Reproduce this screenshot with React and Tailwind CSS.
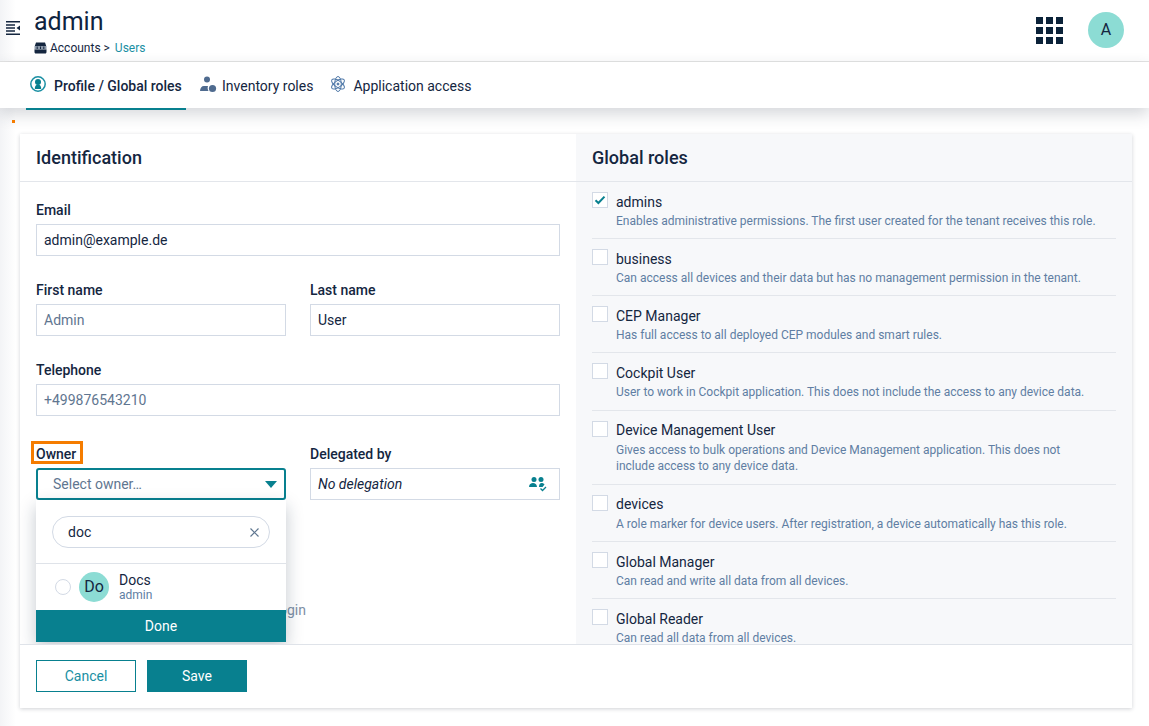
import React from "react";

const roles = [
  { name: "admins", desc: "Enables administrative permissions. The first user created for the tenant receives this role.", checked: true, h: "h-[57px]" },
  { name: "business", desc: "Can access all devices and their data but has no management permission in the tenant.", h: "h-[57px]" },
  { name: "CEP Manager", desc: "Has full access to all deployed CEP modules and smart rules.", h: "h-[57px]" },
  { name: "Cockpit User", desc: "User to work in Cockpit application. This does not include the access to any device data.", h: "h-[58px]" },
  { name: "Device Management User", desc: "Gives access to bulk operations and Device Management application. This does not include access to any device data.", h: "h-[74px]", tight: true },
  { name: "devices", desc: "A role marker for device users. After registration, a device automatically has this role.", h: "h-[57px]", tight: true },
  { name: "Global Manager", desc: "Can read and write all data from all devices.", h: "h-[57px]" },
  { name: "Global Reader", desc: "Can read all data from all devices.", h: "h-[57px]" },
];

const Field = ({ label, value, muted }) => (
  <div className="flex flex-col">
    <label className="h-[20px] text-sm leading-5 font-medium text-[#14263f] mb-1">{label}</label>
    <div className={`h-8 border border-[#d3dae5] px-[7px] text-sm leading-[30px] ${muted ? "text-[#5f7690]" : "text-[#14263f]"}`}>
      {value}
    </div>
  </div>
);

const RoleRow = ({ role, last }) => (
  <div className={`flex gap-2 pt-[10px] ${role.h} ${last ? "" : "border-b border-[#e3e6eb]"}`}>
    <div className="w-4 h-4 border border-[#d3dae5] bg-white flex items-center justify-center shrink-0">
      {role.checked && (
        <svg width="12" height="10" viewBox="0 0 12 10">
          <path d="M1.5 5.2 4.4 8 10.5 1.6" fill="none" stroke="#08808f" strokeWidth="2" />
        </svg>
      )}
    </div>
    <div className="min-w-0">
      <div className={`text-sm leading-5 text-[#14263f] ${role.tight ? "-mt-px" : ""}`}>{role.name}</div>
      <div className={`text-xs leading-4 text-[#607ea3] pr-[20px] ${role.tight ? "mt-[2px]" : "mt-px"}`}>{role.desc}</div>
    </div>
  </div>
);

const OwnerDropdown = () => (
  <div className="absolute left-0 right-0 top-[32px] z-10 bg-white shadow-[0_6px_16px_rgba(20,38,63,0.25)]">
    <div className="h-[64px] border-b border-[#dfe3e9] px-4 pt-4">
      <div className="h-8 rounded-full border border-[#d3dae5] pl-[15px] pr-[10px] flex items-center justify-between text-sm text-[#14263f]">
        <span>doc</span>
        <svg width="9" height="9" viewBox="0 0 9 9">
          <path d="M.5.5l8 8M8.5.5l-8 8" stroke="#5f7690" strokeWidth="1.2" />
        </svg>
      </div>
    </div>
    <div className="h-[46px] flex items-center pl-[19px]">
      <div className="w-4 h-4 rounded-full border border-[#d3dae5]"></div>
      <div className="ml-2 w-[30px] h-[30px] rounded-full bg-[#8cdcd4] flex items-center justify-center text-base text-[#14263f]">Do</div>
      <div className="ml-[10px]">
        <div className="text-sm leading-[15px] text-[#14263f]">Docs</div>
        <div className="text-xs leading-[14px] text-[#607ea3]">admin</div>
      </div>
    </div>
    <div className="h-8 bg-[#08808f] text-white text-sm leading-8 text-center">Done</div>
  </div>
);

const App = () => {
  return (
    <div className="relative w-[1149px] h-[726px] overflow-hidden bg-white flex flex-col font-['Roboto',sans-serif] text-[#14263f]">
      {/* collapsed navigator shadow */}
      <div className="absolute left-0 top-0 bottom-0 w-[16px] bg-gradient-to-r from-[#f3f4f6] to-transparent"></div>

      <header className="relative h-[62px] shrink-0 border-b border-[#e4e4e4] flex items-start">
        <svg className="mt-[21px] ml-[6px]" width="14" height="14" viewBox="0 0 14 14">
          <path d="M0 .7h14M0 4h9M0 7h9M0 10h9M0 13.300h14" stroke="#14263f" strokeWidth="1.400" fill="none" />
          <path d="M14 4.500v5l-3.500-2.500z" fill="#14263f" />
        </svg>
        <div className="ml-[14px] mt-[7px]">
          <div className="text-[25px] leading-[30px] text-[#0f2340]">admin</div>
          <div className="flex items-center text-xs leading-4 mt-[3px]">
            <svg width="13" height="12" viewBox="0 0 13 12">
              <path d="M2 .5h9l1.200 3.500H.800z" fill="#14263f" />
              <rect x=".500" y="4" width="12" height="3.500" fill="#8a97a8" />
              <path d="M3.200 4.500v2.500M6.500 4.500v2.500M9.800 4.500v2.500" stroke="#14263f" strokeWidth="1" />
              <path d="M.500 7.500h12V10c0 .8-.5 1.500-1.300 1.500H1.800C1 11.500.500 10.800.500 10z" fill="#14263f" />
            </svg>
            <span className="ml-[3px]">Accounts &gt; </span>
            <span className="ml-[5px] text-[#1a8fa3]">Users</span>
          </div>
        </div>
        <div className="ml-auto mr-[25px] mt-[12px] flex items-center">
          <div className="grid grid-cols-3 gap-[3px] w-[27px]">
            {[0, 1, 2, 3, 4, 5, 6, 7, 8].map((i) => (
              <div key={i} className="w-[7px] h-[7px] bg-[#0b2239]"></div>
            ))}
          </div>
          <div className="ml-[25px] w-9 h-9 rounded-full bg-[#8cdcd4] flex items-center justify-center text-base text-[#14263f]">A</div>
        </div>
      </header>

      <nav className="relative z-[1] h-[46px] shrink-0 bg-white flex pl-[26px] shadow-[0_6px_16px_rgba(40,50,70,0.2)]">
        <div className="h-[48px] w-[160px] border-b-2 border-[#08808f] flex items-start pt-[14px] pl-[4px]">
          <svg width="16" height="16" viewBox="0 0 16 16">
            <circle cx="8" cy="8" r="7.200" fill="none" stroke="#1a8fa3" strokeWidth="1.500" />
            <circle cx="8" cy="6" r="3" fill="#08808f" />
            <path d="M4.800 13c0-3 1-4.500 3.200-4.500s3.200 1.500 3.200 4.500z" fill="#08808f" />
          </svg>
          <span className="ml-2 text-sm leading-5 font-medium">Profile / Global roles</span>
        </div>
        <div className="flex items-start pt-[14px] ml-[14px]">
          <svg width="17" height="17" viewBox="0 0 17 17">
            <circle cx="7" cy="3.500" r="3" fill="#4f6b8f" />
            <path d="M0 15c.2-3 1.500-5 4-5h4c-.6 1.600-.4 3.500.5 5z" fill="#4f6b8f" />
            <circle cx="12.500" cy="12.500" r="3.600" fill="#4f6b8f" />
          </svg>
          <span className="ml-[5px] text-sm leading-5">Inventory roles</span>
        </div>
        <div className="flex items-start pt-[13px] ml-[17px]">
          <svg width="16" height="18" viewBox="0 0 16 18" fill="none" stroke="#4f78a8" strokeWidth="1">
            <ellipse cx="8" cy="9" rx="7.500" ry="3.300" transform="rotate(35 8 9)" />
            <ellipse cx="8" cy="9" rx="7.500" ry="3.300" transform="rotate(-35 8 9)" />
            <ellipse cx="8" cy="9" rx="7.500" ry="3.300" transform="rotate(90 8 9)" />
            <circle cx="8" cy="9" r="1" fill="#4f78a8" />
          </svg>
          <span className="ml-[7px] mt-px text-sm leading-5">Application access</span>
        </div>
      </nav>

      <div className="absolute left-[12px] top-[120px] z-[2] w-[3px] h-[3px] bg-[#f57c00]"></div>

      <main className="relative flex-1 min-h-0 pl-[20px] pr-[17px] pt-[26px] pb-[18px]">
        <div className="h-full bg-white flex flex-col shadow-[0_1px_4px_rgba(40,50,70,0.22)]">
          <div className="flex-1 min-h-0 grid grid-cols-2 overflow-hidden">
            <section className="min-h-0">
              <h2 className="h-[48px] border-b border-[#e3e6eb] pl-4 text-lg leading-[47px] font-medium">Identification</h2>
              <div className="px-4 pt-[18px] flex flex-col gap-[24px]">
                <Field label="Email" value="admin@example.de" />
                <div className="grid grid-cols-2 gap-[24px]">
                  <Field label="First name" value="Admin" muted />
                  <Field label="Last name" value="User" />
                </div>
                <Field label="Telephone" value="+499876543210" muted />
                <div className="grid grid-cols-2 gap-[24px] pt-[4px]">
                  <div className="relative flex flex-col">
                    <label className="h-[20px] mb-1 text-sm font-medium">
                      <span className="block w-fit h-[17px] -ml-[2px] pl-[2px] pr-[4px] pt-[2px] leading-[17px] outline-[3px] outline-solid outline-[#f57c00]">Owner</span>
                    </label>
                    <div className="relative">
                      <div className="h-8 border-2 border-[#08808f] rounded-[3px] pl-[15px] pr-[7px] flex items-center justify-between text-sm text-[#5f7690]">
                        <span>Select owner…</span>
                        <svg width="12" height="7" viewBox="0 0 12 7"><path d="M0 0h12L6 7z" fill="#08808f" /></svg>
                      </div>
                      <OwnerDropdown />
                    </div>
                  </div>
                  <div className="flex flex-col">
                    <label className="h-[20px] mb-1 text-sm leading-5 font-medium">Delegated by</label>
                    <div className="h-8 border border-[#d3dae5] pl-[7px] pr-[12px] flex items-center justify-between text-sm italic">
                      <span>No delegation</span>
                      <svg width="18" height="16" viewBox="0 0 18 16">
                        <circle cx="5" cy="3.500" r="2.500" fill="#08808f" />
                        <circle cx="12" cy="3.500" r="2.500" fill="#08808f" />
                        <path d="M0 11c.2-3 2-4 4-4s3.800 1 4 4zM10 11c.2-3 1-4 2.500-4 1.300 0 2.500.5 3 1.500L13.500 11z" fill="#08808f" />
                        <path d="M11.500 12.500l2 2 3.500-3.500" fill="none" stroke="#08808f" strokeWidth="1.300" />
                      </svg>
                    </div>
                  </div>
                </div>
                <div className="mt-[76px] w-[270px] text-right whitespace-nowrap text-sm leading-5 text-[#7d90a6]">Send password reset at next login</div>
              </div>
            </section>

            <section className="min-h-0 bg-[#f7f8fa]">
              <h2 className="h-[48px] border-b border-[#e3e6eb] pl-4 text-lg leading-[47px] font-medium">Global roles</h2>
              <div className="px-4">
                {roles.map((role, i) => (
                  <RoleRow key={role.name} role={role} last={i === roles.length - 1} />
                ))}
              </div>
            </section>
          </div>

          <footer className="h-[64px] shrink-0 border-t border-[#dfe3e9] flex items-start pl-4 pt-[15px] gap-[11px] bg-white relative">
            <button className="w-[100px] h-8 border border-[#08808f] bg-white text-sm text-[#1a8fa3]">Cancel</button>
            <button className="w-[100px] h-8 bg-[#08808f] text-sm text-white">Save</button>
          </footer>
        </div>
      </main>
    </div>
  );
};

export default App;
